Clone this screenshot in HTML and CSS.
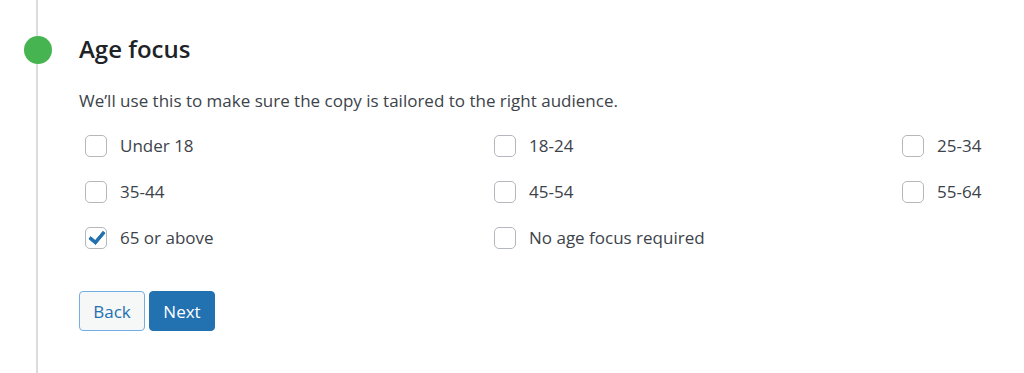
FILE: index.html
```html
<!DOCTYPE html>
<html lang="en">
<head>
<meta charset="utf-8">
<title>Age focus</title>
<link rel="stylesheet" href="styles.css">
</head>
<body>
<div class="timeline">
  <section class="step">
    <h2 class="step-title">Age focus</h2>
    <p class="step-desc">We’ll use this to make sure the copy is tailored to the right audience.</p>
    <div class="options">
      <label class="option"><input type="checkbox"><span>Under 18</span></label>
      <label class="option"><input type="checkbox"><span>18-24</span></label>
      <label class="option"><input type="checkbox"><span>25-34</span></label>
      <label class="option"><input type="checkbox"><span>35-44</span></label>
      <label class="option"><input type="checkbox"><span>45-54</span></label>
      <label class="option"><input type="checkbox"><span>55-64</span></label>
      <label class="option"><input type="checkbox" checked><span>65 or above</span></label>
      <label class="option"><input type="checkbox"><span>No age focus required</span></label>
    </div>
    <div class="actions">
      <button class="btn btn-secondary" type="button">Back</button>
      <button class="btn btn-primary" type="button">Next</button>
    </div>
  </section>
</div>
</body>
</html>
```
FILE: styles.css
```css
html, body {
  margin: 0;
  padding: 0;
  background: #fff;
  font-family: "Open Sans", "Noto Sans", sans-serif;
  color: #3c434a;
}

.timeline {
  position: relative;
  min-height: 373px;
  padding-left: 79px;
  box-sizing: border-box;
}

.timeline::before {
  content: "";
  position: absolute;
  left: 36px;
  top: 0;
  bottom: 0;
  width: 2px;
  background: #dcdcde;
}

.step {
  position: relative;
  padding-top: 33px;
}

.step::before {
  content: "";
  position: absolute;
  left: -55px;
  top: 36px;
  width: 28px;
  height: 28px;
  border-radius: 50%;
  background: #46b450;
}

.step-title {
  margin: 0;
  font-size: 24px;
  font-weight: 600;
  line-height: 32px;
  color: #1d2327;
}

.step-desc {
  margin: 24px 0 0;
  font-size: 17px;
  line-height: 24px;
  color: #3c434a;
}

.options {
  display: grid;
  grid-template-columns: 409px 408px 1fr;
  row-gap: 24px;
  margin-top: 22px;
  padding-left: 6px;
}

.option {
  display: flex;
  align-items: center;
  gap: 13px;
  font-size: 17px;
  line-height: 22px;
  color: #3c434a;
  cursor: pointer;
}

.option input {
  appearance: none;
  -webkit-appearance: none;
  margin: 0;
  width: 22px;
  height: 22px;
  border: 1px solid #b4b7bb;
  border-radius: 5px;
  background: #fff;
  box-sizing: border-box;
  display: grid;
  place-items: center;
  flex-shrink: 0;
}

.option input:checked::after {
  content: "";
  width: 6px;
  height: 12px;
  border: solid #2271b1;
  border-width: 0 4px 4px 0;
  border-radius: 1px;
  transform: translate(1px, -2px) rotate(40deg);
}

.actions {
  display: flex;
  gap: 4px;
  margin-top: 42px;
}

.btn {
  font-family: inherit;
  font-size: 17px;
  height: 40px;
  padding: 0 12px;
  min-width: 66px;
  border-radius: 4px;
  cursor: pointer;
}

.btn-secondary {
  background: #f6f7f7;
  border: 1px solid #72aee6;
  color: #2271b1;
}

.btn-primary {
  background: #2271b1;
  border: 1px solid #2271b1;
  color: #fff;
}
```
